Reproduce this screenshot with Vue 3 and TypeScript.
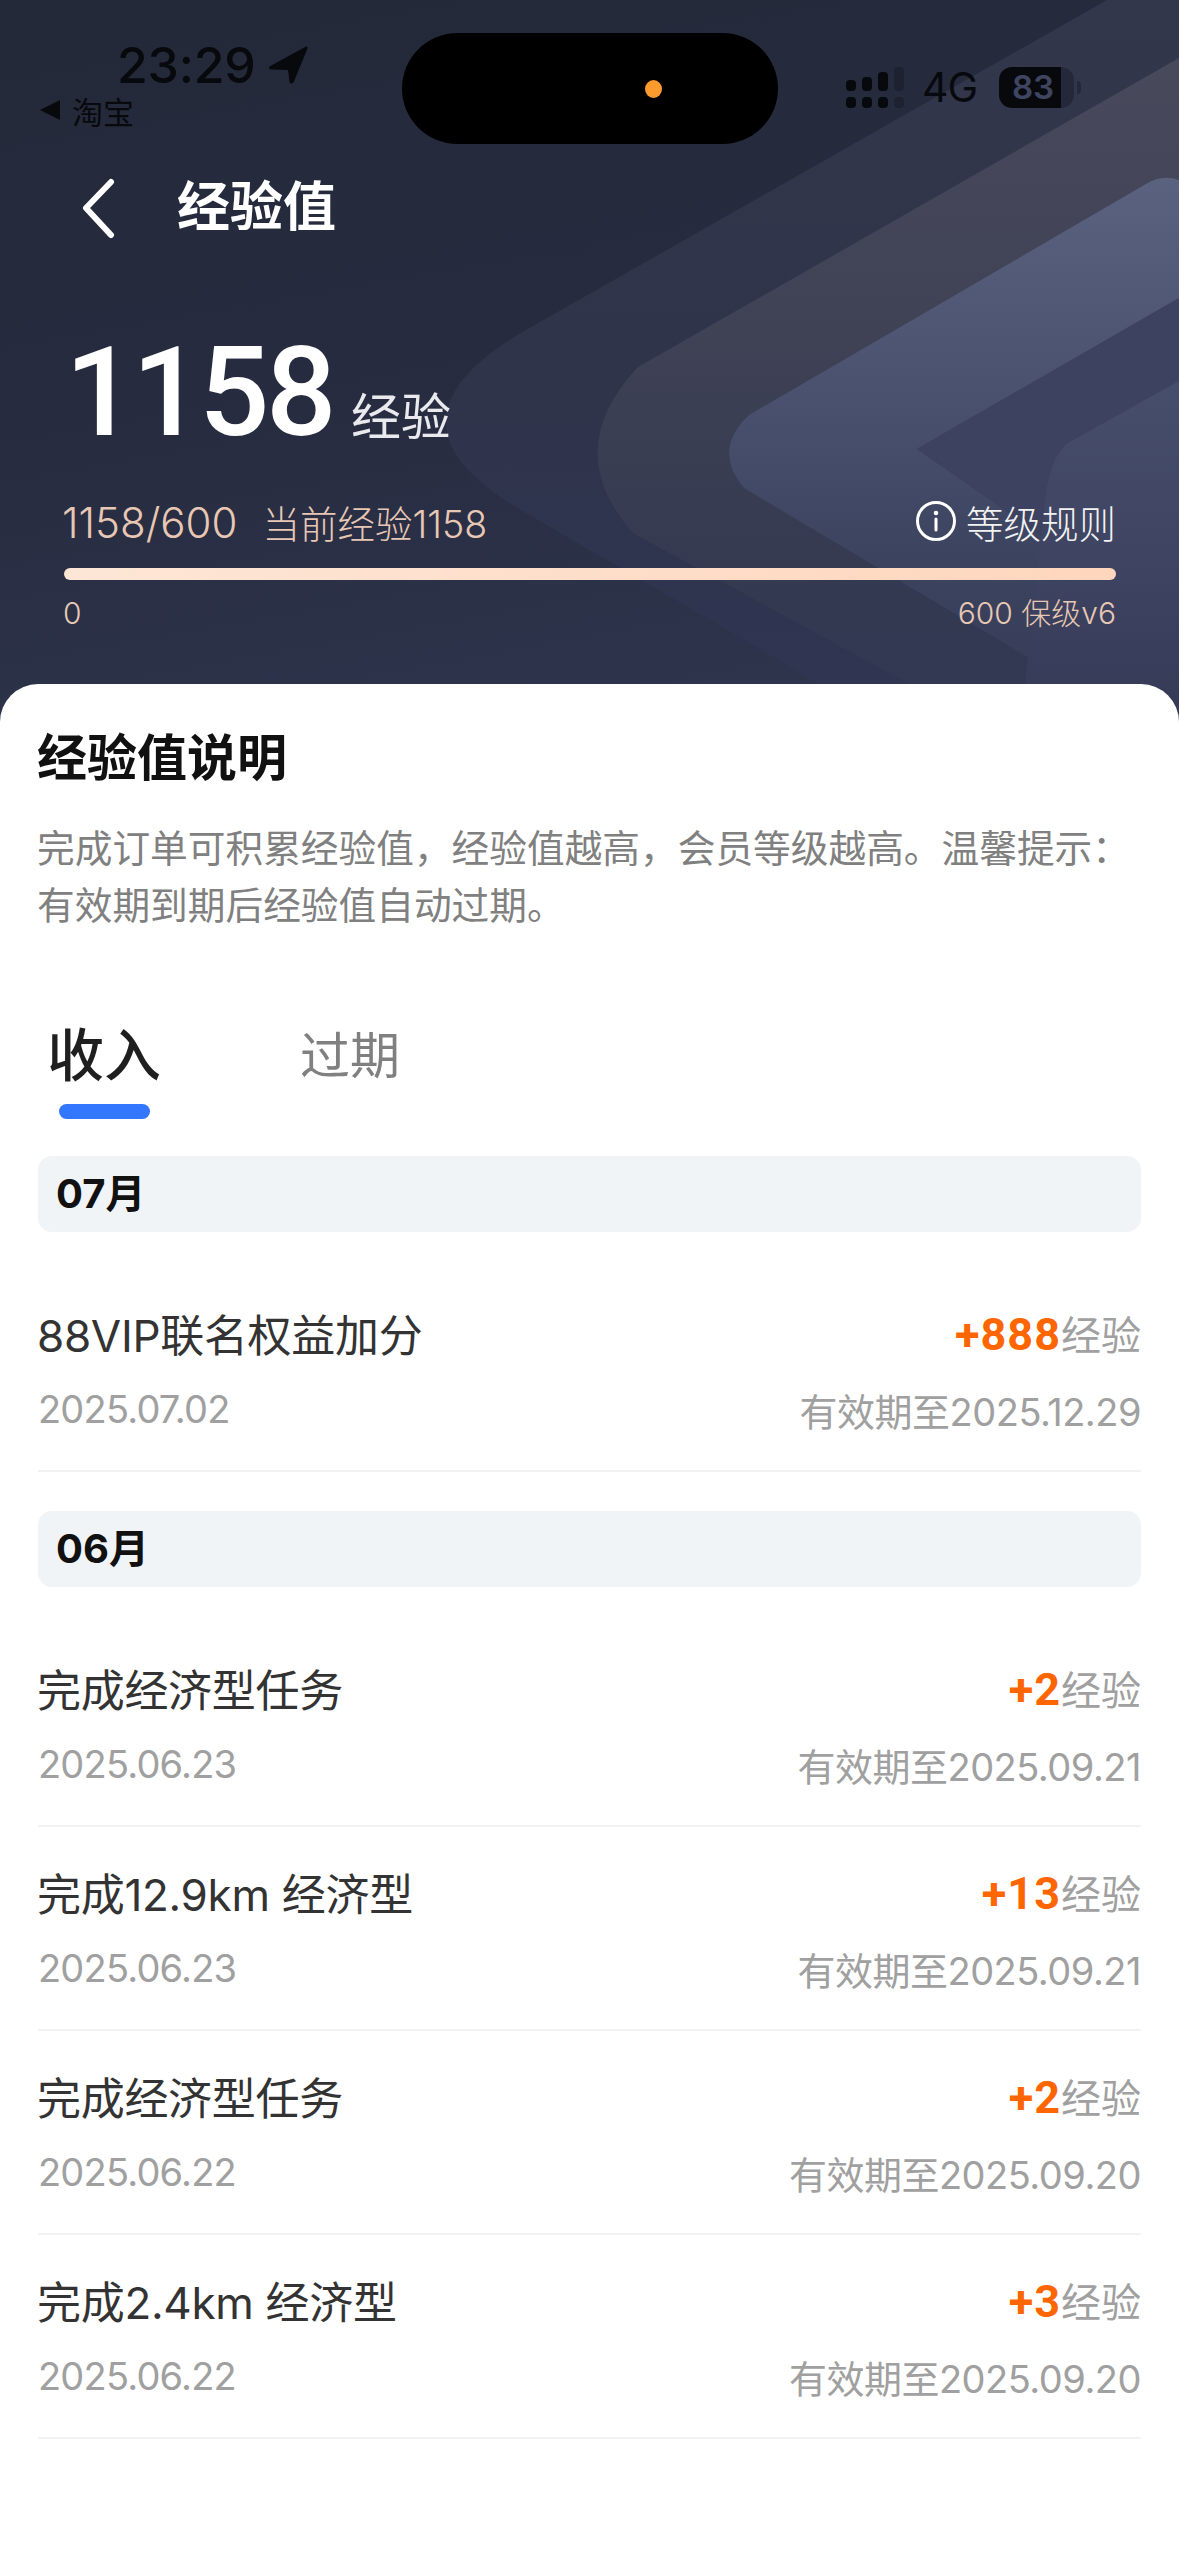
<template>
  <div class="page">
    <section class="hero">
      <svg class="hero-bg" width="1179" height="730" viewBox="0 0 1179 730">
        <defs>
          <linearGradient id="band1" x1="0" y1="0" x2="0" y2="1">
            <stop offset="0" stop-color="#33374c" />
            <stop offset="0.5" stop-color="#2f344a" />
            <stop offset="0.85" stop-color="#2f3550" />
            <stop offset="1" stop-color="#313753" />
          </linearGradient>
          <linearGradient id="band2" x1="0" y1="0" x2="0" y2="1">
            <stop offset="0" stop-color="#48495b" />
            <stop offset="0.43" stop-color="#3f4155" />
            <stop offset="0.58" stop-color="#393e53" />
            <stop offset="0.81" stop-color="#333950" />
            <stop offset="1" stop-color="#323854" />
          </linearGradient>
          <linearGradient id="band3" x1="0" y1="0" x2="0" y2="1">
            <stop offset="0" stop-color="#5a627f" />
            <stop offset="0.49" stop-color="#464d6a" />
            <stop offset="0.69" stop-color="#3c435f" />
            <stop offset="1" stop-color="#353b57" />
          </linearGradient>
          <linearGradient id="band4" x1="0" y1="0" x2="0" y2="1">
            <stop offset="0" stop-color="#474e6c" />
            <stop offset="0.55" stop-color="#3d4360" />
            <stop offset="1" stop-color="#343a56" />
          </linearGradient>
        </defs>
        <path fill="url(#band1)" d="M1107 0L526 330Q366 422 526 513L900 730H1179V0Z" />
        <path fill="url(#band2)" d="M1179 58L638 367Q560 450 633 533L904 681L990 730H1179Z" />
        <path fill="url(#band3)" d="M1146 184Q1162 174 1179 180V298L917 449L1179 630V730H1150L744 488Q712 450 749 415Z" />
        <path fill="#3c4260" d="M1179 298L917 449L1179 630Z" />
        <path fill="url(#band4)" d="M1179 381L1068 443Q1048 458 1044 512L1020 730H1179Z" />
      </svg>

      <div class="status">
        <div class="status-left">
          <div class="clock">
            <span>23:29</span>
            <svg width="40" height="40" viewBox="0 0 40 40">
              <path fill="#08090d" d="M38 1.5L1.5 21.5Q0 24 3 24.5L20 25L21.5 37Q23 40 25.5 37.5L39.5 3.5Q40 1 38 1.5Z" />
            </svg>
          </div>
          <div class="back-app">
            <svg width="22" height="22" viewBox="0 0 22 22">
              <path fill="#08090d" d="M21 1V21L1 11Z" />
            </svg>
            <span>淘宝</span>
          </div>
        </div>
        <div class="island"><i></i></div>
        <div class="status-right">
          <div class="signal">
            <div v-for="(h, i) in signalBars" :key="i" class="signal-col" :class="{ dim: i === 3 }">
              <b :style="{ height: h + 'px' }"></b>
              <b class="low"></b>
            </div>
          </div>
          <span class="net">4G</span>
          <div class="battery">
            <span>83</span>
          </div>
          <i class="battery-nub"></i>
        </div>
      </div>

      <div class="nav">
        <svg width="40" height="64" viewBox="0 0 40 64">
          <path d="M33 7L8 33L33 60" fill="none" stroke="#fff" stroke-width="6" stroke-linecap="round" stroke-linejoin="round" />
        </svg>
        <h1>经验值</h1>
      </div>

      <div class="score">
        <strong>1158</strong>
        <span>经验</span>
      </div>

      <div class="progress-head">
        <div class="progress-text">
          <span class="ratio">1158/600</span>
          <span>当前经验1158</span>
        </div>
        <div class="rules">
          <svg width="42" height="42" viewBox="0 0 42 42">
            <circle cx="21" cy="21" r="18.5" fill="none" stroke="#fff" stroke-width="3" />
            <circle cx="21" cy="13" r="2.3" fill="#fff" />
            <path d="M21 19V30" stroke="#fff" stroke-width="3" stroke-linecap="round" />
          </svg>
          <span>等级规则</span>
        </div>
      </div>
      <div class="bar"></div>
      <div class="bar-labels">
        <span>0</span>
        <span>600 保级v6</span>
      </div>
    </section>

    <section class="card">
      <h2>经验值说明</h2>
      <p class="desc">完成订单可积累经验值，经验值越高，会员等级越高。温馨提示：<br />有效期到期后经验值自动过期。</p>

      <div class="tabs">
        <div class="tab active">
          <span>收入</span>
          <i></i>
        </div>
        <div class="tab">
          <span>过期</span>
        </div>
      </div>

      <div v-for="group in groups" :key="group.month" class="group">
        <div class="month">{{ group.month }}</div>
        <div class="rows">
          <div v-for="(row, i) in group.rows" :key="i" class="row">
            <div class="line">
              <span class="title">{{ row.title }}</span>
              <span class="points"><b>+{{ row.points }}</b>经验</span>
            </div>
            <div class="line sub">
              <span class="date">{{ row.date }}</span>
              <span>有效期至{{ row.expires }}</span>
            </div>
          </div>
        </div>
      </div>
    </section>
  </div>
</template>

<script setup lang="ts">
interface Row {
  title: string
  points: number
  date: string
  expires: string
}

interface Group {
  month: string
  rows: Row[]
}

const signalBars: number[] = [11, 14, 19, 24]

const groups: Group[] = [
  {
    month: '07月',
    rows: [{ title: '88VIP联名权益加分', points: 888, date: '2025.07.02', expires: '2025.12.29' }],
  },
  {
    month: '06月',
    rows: [
      { title: '完成经济型任务', points: 2, date: '2025.06.23', expires: '2025.09.21' },
      { title: '完成12.9km 经济型', points: 13, date: '2025.06.23', expires: '2025.09.21' },
      { title: '完成经济型任务', points: 2, date: '2025.06.22', expires: '2025.09.20' },
      { title: '完成2.4km 经济型', points: 3, date: '2025.06.22', expires: '2025.09.20' },
    ],
  },
]
</script>

<style>
html,
body {
  background: #fff;
}
</style>

<style scoped>
.page {
  width: 1179px;
  min-height: 2556px;
  background: #fff;
  font-family: Inter, 'Noto Sans CJK SC', sans-serif;
  overflow: hidden;
}

.hero {
  position: relative;
  height: 730px;
  background: linear-gradient(170deg, #242939 0%, #262b3f 45%, #30374f 100%);
  overflow: hidden;
}

.hero-bg {
  position: absolute;
  top: 0;
  left: 0;
}

.status,
.nav,
.score,
.progress-head,
.bar,
.bar-labels {
  position: relative;
}

.status {
  height: 150px;
  display: flex;
  justify-content: space-between;
  color: #08090d;
}

.status-left {
  padding: 40px 0 0 39px;
}

.clock {
  display: flex;
  align-items: center;
  gap: 12px;
  margin-left: 78px;
  height: 50px;
  font-size: 50px;
  font-weight: 500;
  letter-spacing: -0.2px;
}

.back-app {
  display: flex;
  align-items: center;
  gap: 11px;
  height: 40px;
  margin-top: 0;
  font-size: 31px;
}

.island {
  position: absolute;
  top: 33px;
  left: 402px;
  width: 376px;
  height: 111px;
  border-radius: 56px;
  background: #000;
}

.island i {
  position: absolute;
  left: 243px;
  top: 47px;
  width: 17px;
  height: 18px;
  border-radius: 50%;
  background: #ff9a2e;
}

.status-right {
  display: flex;
  align-items: flex-start;
  padding: 67px 98px 0 0;
}

.signal {
  display: flex;
  gap: 6px;
  height: 41px;
}

.signal-col {
  width: 10px;
  height: 41px;
  display: flex;
  flex-direction: column;
  justify-content: flex-end;
  gap: 6px;
}

.signal-col b {
  display: block;
  background: #08090d;
  border-radius: 4px;
}

.signal-col b.low {
  height: 11px;
}

.signal-col.dim b {
  background: #1d2130;
}

.net {
  margin-left: 18px;
  font-size: 41px;
  line-height: 41px;
  font-weight: 400;
  width: 58px;
  letter-spacing: -1px;
}

.battery {
  margin-left: 19px;
  width: 75px;
  height: 41px;
  border-radius: 13px;
  background: linear-gradient(90deg, #08090d 0 62px, #24283a 62px);
  color: #3f4560;
  font-size: 33px;
  line-height: 41px;
  font-weight: 600;
  padding-left: 13px;
  box-sizing: border-box;
}

.battery-nub {
  margin: 14px 0 0 3px;
  width: 4px;
  height: 13px;
  border-radius: 0 6px 6px 0;
  background: #24283a;
}

.nav {
  display: flex;
  align-items: center;
  height: 114px;
  padding-left: 78px;
}

.nav h1 {
  margin: 0 0 0 59px;
  font-size: 53px;
  line-height: 64px;
  font-weight: 600;
  color: #fff;
}

.score {
  display: flex;
  align-items: baseline;
  height: 116px;
  margin-top: 71px;
  padding-left: 65px;
  color: #fff;
}

.score strong {
  font-family: Roboto, sans-serif;
  font-size: 124px;
  line-height: 116px;
  font-weight: 500;
  letter-spacing: -3.5px;
}

.score span {
  margin-left: 18px;
  font-size: 50px;
  color: #e9e9ee;
}

.progress-head {
  display: flex;
  justify-content: space-between;
  align-items: center;
  height: 50px;
  margin-top: 45px;
  padding: 0 63px 0 62px;
}

.progress-text {
  display: flex;
  align-items: baseline;
  gap: 25px;
  font-size: 37.5px;
  font-weight: 300;
  color: #e8c8b4;
}

.ratio {
  font-size: 42px;
}

.rules {
  display: flex;
  align-items: center;
  gap: 9px;
  font-size: 37.5px;
  font-weight: 300;
  color: #f2f2f2;
}

.bar {
  height: 12px;
  margin: 22px 63px 0 64px;
  border-radius: 6px;
  background: linear-gradient(90deg, #fde6d6, #fed6bd);
}

.bar-labels {
  display: flex;
  justify-content: space-between;
  margin-top: 13px;
  padding: 0 63px;
  font-size: 30px;
  line-height: 40px;
  font-weight: 300;
  color: #e8c8b4;
}

.card {
  position: relative;
  margin-top: -46px;
  padding: 44px 38px 0;
  border-radius: 38px 38px 0 0;
  background: #fff;
}

.card h2 {
  margin: 0 0 0 -1px;
  font-size: 50px;
  line-height: 60px;
  font-weight: 700;
  color: #111;
}

.desc {
  margin: 32px 0 0 -1px;
  font-size: 37.7px;
  line-height: 56.5px;
  color: #808080;
  white-space: nowrap;
}

.tabs {
  display: flex;
  align-items: flex-start;
  gap: 139px;
  margin-top: 92px;
  padding-left: 9px;
}

.tab {
  display: flex;
  flex-direction: column;
  align-items: center;
  font-size: 50px;
  line-height: 62px;
  color: #808080;
  height: 94px;
}

.tab.active {
  font-size: 57px;
  font-weight: 500;
  color: #1f1f1f;
}

.tab i {
  display: block;
  width: 91px;
  height: 15px;
  margin-top: 17px;
  border-radius: 8px;
  background: #3377ff;
}

.group {
  margin-bottom: 39px;
}

.tabs + .group {
  margin-top: 37px;
}

.month {
  height: 76px;
  padding-left: 18px;
  border-radius: 14px;
  background: #f1f4f7;
  font-size: 40px;
  line-height: 76px;
  font-weight: 700;
  color: #111;
}

.rows {
  margin-top: 36px;
}

.row {
  height: 204px;
  box-sizing: border-box;
  padding-top: 41px;
  border-bottom: 2px solid #f2f2f2;
}

.line {
  display: flex;
  justify-content: space-between;
  align-items: center;
  height: 48px;
}

.title {
  margin-left: -1px;
  font-size: 44px;
  letter-spacing: -0.3px;
  color: #333;
}

.points {
  font-size: 40px;
  color: #a0a0a0;
}

.points b {
  font-family: Roboto, sans-serif;
  font-size: 45px;
  font-weight: 700;
  letter-spacing: 1px;
  color: #ff6600;
}

.sub {
  height: 44px;
  margin-top: 30px;
  font-size: 38px;
  letter-spacing: -0.5px;
  color: #a0a0a0;
}

.date {
  letter-spacing: -0.8px;
}
</style>
